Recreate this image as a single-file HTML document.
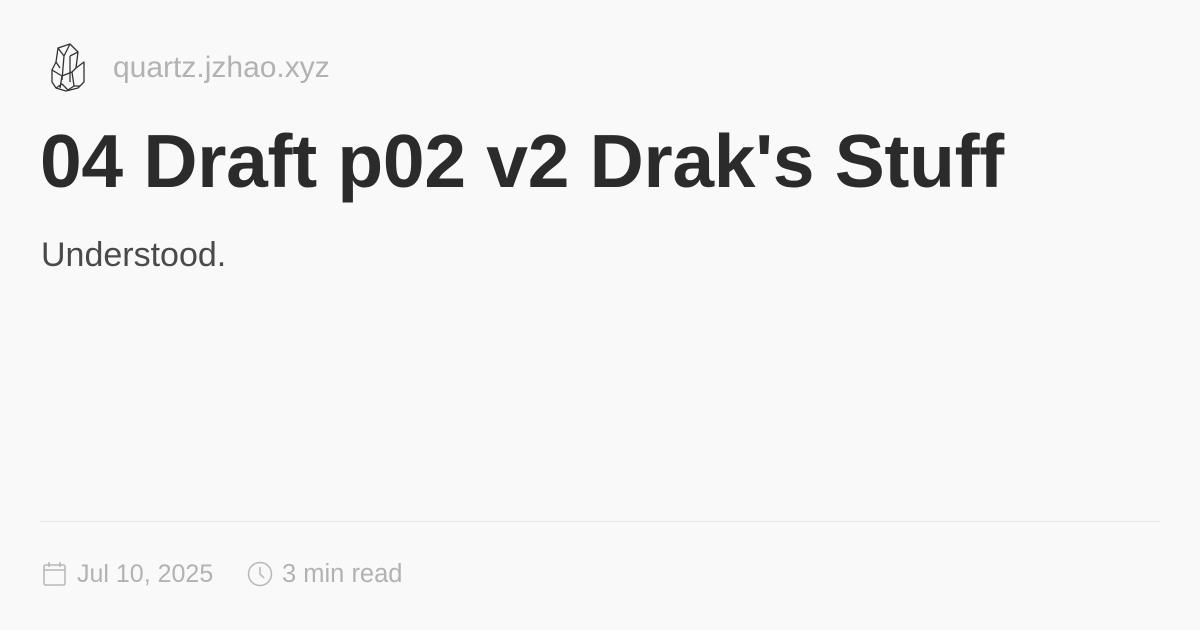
<!DOCTYPE html>
<html><head><meta charset="utf-8"><style>
html,body{margin:0;padding:0;width:1200px;height:630px;background:#faf9f9;overflow:hidden;font-family:"Liberation Sans",sans-serif}
.site{position:absolute;left:113px;top:51px;font-size:30px;color:#b3b1b1;}
.logo{position:absolute;left:48px;top:42px}
h1{position:absolute;left:40px;top:118px;margin:0;font-size:75px;line-height:86px;font-weight:bold;color:#2b2b2b;letter-spacing:-0.3px;white-space:nowrap}
.desc{position:absolute;left:41px;top:236px;font-size:34px;color:#4a4a4a}
.rule{position:absolute;left:40px;right:40px;top:521px;height:1px;background:#e6e4e4}
.foot{position:absolute;top:560px;font-size:25px;color:#b3b1b1}
</style></head><body>
<svg class="logo" width="40" height="52" viewBox="0 0 40 52" fill="none" stroke="#333" stroke-width="1.3" stroke-linejoin="round">
<path d="M10 6 L22 2 L30 10 L28 26 L36 20 L36 40 L30 46 L18 49 L8 46 L4 40 L4 28 L8 20 Z"/>
<path d="M10 6 L16 14 L22 2 M16 14 L14 38 M22 14 L30 10 M22 14 L22 40 M8 20 L12 26 M4 28 L14 34 L24 30 L28 26 M14 34 L12 46 M24 30 L26 44 M8 46 L14 42 L20 48 L26 44 L32 44"/>
</svg>
<div class="site">quartz.jzhao.xyz</div>
<h1>04 Draft p02 v2 Drak's Stuff</h1>
<div class="desc">Understood.</div>
<div class="rule"></div>
<svg style="position:absolute;left:43px;top:561px" width="24" height="25" viewBox="0 0 24 25" fill="none" stroke="#b8b6b6" stroke-width="1.5"><rect x="1" y="4" width="21" height="20" rx="1.5"/><path d="M1 9h21M6 1v5M17 1v5"/></svg>
<div class="foot" style="left:77px">Jul 10, 2025</div>
<svg style="position:absolute;left:247px;top:561px" width="26" height="26" viewBox="0 0 26 26" fill="none" stroke="#b8b6b6" stroke-width="1.5"><circle cx="13" cy="13" r="11.5"/><path d="M13 6v7l4 4"/></svg>
<div class="foot" style="left:282px;font-size:25.5px">3 min read</div>
</body></html>
